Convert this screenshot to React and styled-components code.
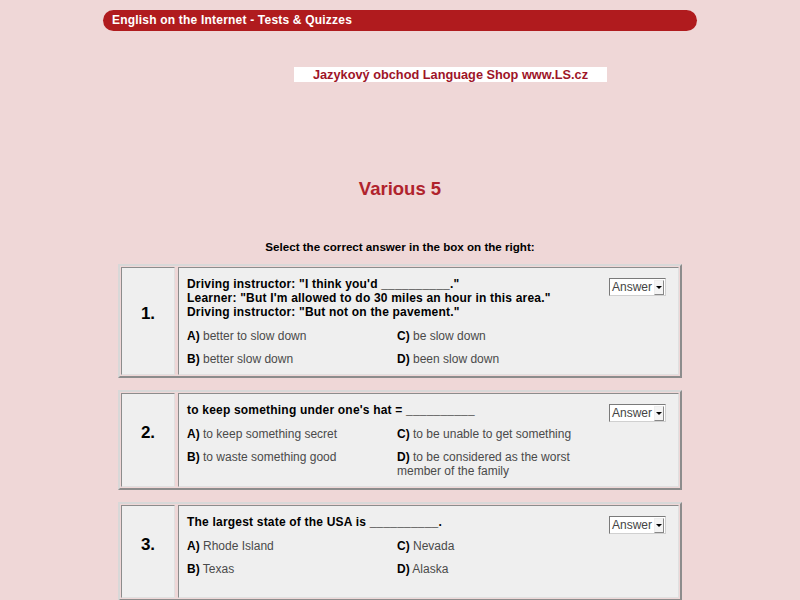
import React from 'react'
import styled, { createGlobalStyle } from 'styled-components'

const GlobalStyle = createGlobalStyle`
    body {
        margin: 0;
        background: #efd7d7;
        font-family: "Liberation Sans", Arial, sans-serif;
        color: #000;
    }
`

const Page = styled.div`
    display: flex;
    flex-direction: column;
    align-items: center;
    padding-bottom: 40px;
`

const HeaderBar = styled.div`
    width: 594px;
    height: 21px;
    margin-top: 10px;
    box-sizing: border-box;
    padding-left: 9px;
    background: #b01b1e;
    border-radius: 11px;
    color: #fff;
    font-size: 12px;
    font-weight: bold;
    letter-spacing: 0.2px;
    line-height: 21px;
`

const BannerRow = styled.div`
    width: 594px;
    margin-top: 36px;
`

const Banner = styled.div`
    width: 313px;
    height: 15px;
    margin-left: 191px;
    background: #fff;
    color: #9e1428;
    font-size: 12.75px;
    font-weight: bold;
    line-height: 15px;
    text-align: center;
    white-space: nowrap;
`

const Title = styled.h1`
    margin: 96px 0 0;
    font-size: 18.5px;
    line-height: 22px;
    color: #b0232d;
`

const Instruction = styled.div`
    margin-top: 39px;
    font-size: 11.6px;
    font-weight: bold;
    line-height: 15px;
`

const QuizList = styled.div`
    display: flex;
    flex-direction: column;
    gap: 12px;
    margin-top: 10px;
`

const QuizTable = styled.div`
    width: 564px;
    min-height: 99px;
    box-sizing: border-box;
    display: flex;
    gap: 3px;
    padding: 1px;
    border: 2px solid;
    border-color: #d8d8d8 #8c8c8c #8c8c8c #d8d8d8;
`

const NumberCell = styled.div`
    width: 54px;
    box-sizing: border-box;
    flex-shrink: 0;
    display: flex;
    align-items: center;
    justify-content: center;
    padding-bottom: 14px;
    background: #efefef;
    border: 1px solid;
    border-color: #8c8c8c #e0e0e0 #e0e0e0 #8c8c8c;
    font-size: 17px;
    font-weight: bold;
`

const ContentCell = styled.div`
    flex: 1;
    display: flex;
    justify-content: space-between;
    padding: 9px 12px 8px 8px;
    background: #efefef;
    border: 1px solid;
    border-color: #8c8c8c #e0e0e0 #e0e0e0 #8c8c8c;
`

const Question = styled.div`
    font-size: 12px;
    font-weight: bold;
    letter-spacing: 0.2px;
    line-height: 14px;
`

const Answers = styled.div`
    display: grid;
    grid-template-columns: 210px 192px;
    row-gap: 9px;
    margin-top: 10px;
    font-size: 12px;
    line-height: 14px;
    color: #4a4a4a;
`

const Letter = styled.b`
    color: #000;
`

const SelectBox = styled.div`
    display: flex;
    align-items: center;
    gap: 2px;
    width: 57px;
    height: 18px;
    margin-top: 1px;
    box-sizing: border-box;
    padding: 0 1px 0 2px;
    background: #fff;
    border: 1px solid;
    border-color: #7a7a7a #d0d0d0 #d0d0d0 #7a7a7a;
    font-size: 12px;
    color: #444;
    cursor: default;
`

const ArrowButton = styled.span`
    display: flex;
    align-items: center;
    justify-content: center;
    width: 10px;
    height: 13px;
    margin-left: auto;
    background: #f4f4f4;
    border: 1px solid;
    border-color: #eee #888 #888 #eee;
`

const Arrow = styled.span`
    width: 0;
    height: 0;
    border-left: 3px solid transparent;
    border-right: 3px solid transparent;
    border-top: 3px solid #000;
`

const quizzes = [
    {
        q: ['Driving instructor: "I think you\'d __________."', 'Learner: "But I\'m allowed to do 30 miles an hour in this area."', 'Driving instructor: "But not on the pavement."'],
        a: ['better to slow down', 'be slow down', 'better slow down', 'been slow down'],
    },
    {
        q: ["to keep something under one's hat = __________"],
        a: ['to keep something secret', 'to be unable to get something', 'to waste something good', 'to be considered as the worst member of the family'],
    },
    {
        q: ['The largest state of the USA is __________.'],
        a: ['Rhode Island', 'Nevada', 'Texas', 'Alaska'],
    },
]

const letters = ['A', 'C', 'B', 'D']

const App = () => {
    return (
        <Page>
            <GlobalStyle />
            <HeaderBar>English on the Internet - Tests &amp; Quizzes</HeaderBar>
            <BannerRow>
                <Banner>Jazykový obchod Language Shop www.LS.cz</Banner>
            </BannerRow>
            <Title>Various 5</Title>
            <Instruction>Select the correct answer in the box on the right:</Instruction>
            <QuizList>
                {quizzes.map((quiz, i) => (
                    <QuizTable key={i}>
                        <NumberCell>{i + 1}.</NumberCell>
                        <ContentCell>
                            <div>
                                <Question>
                                    {quiz.q.map((line, j) => (
                                        <div key={j}>{line}</div>
                                    ))}
                                </Question>
                                <Answers>
                                    {quiz.a.map((ans, j) => (
                                        <div key={j}>
                                            <Letter>{letters[j]})</Letter> {ans}
                                        </div>
                                    ))}
                                </Answers>
                            </div>
                            <SelectBox>
                                Answer
                                <ArrowButton><Arrow /></ArrowButton>
                            </SelectBox>
                        </ContentCell>
                    </QuizTable>
                ))}
            </QuizList>
        </Page>
    )
}

export default App
